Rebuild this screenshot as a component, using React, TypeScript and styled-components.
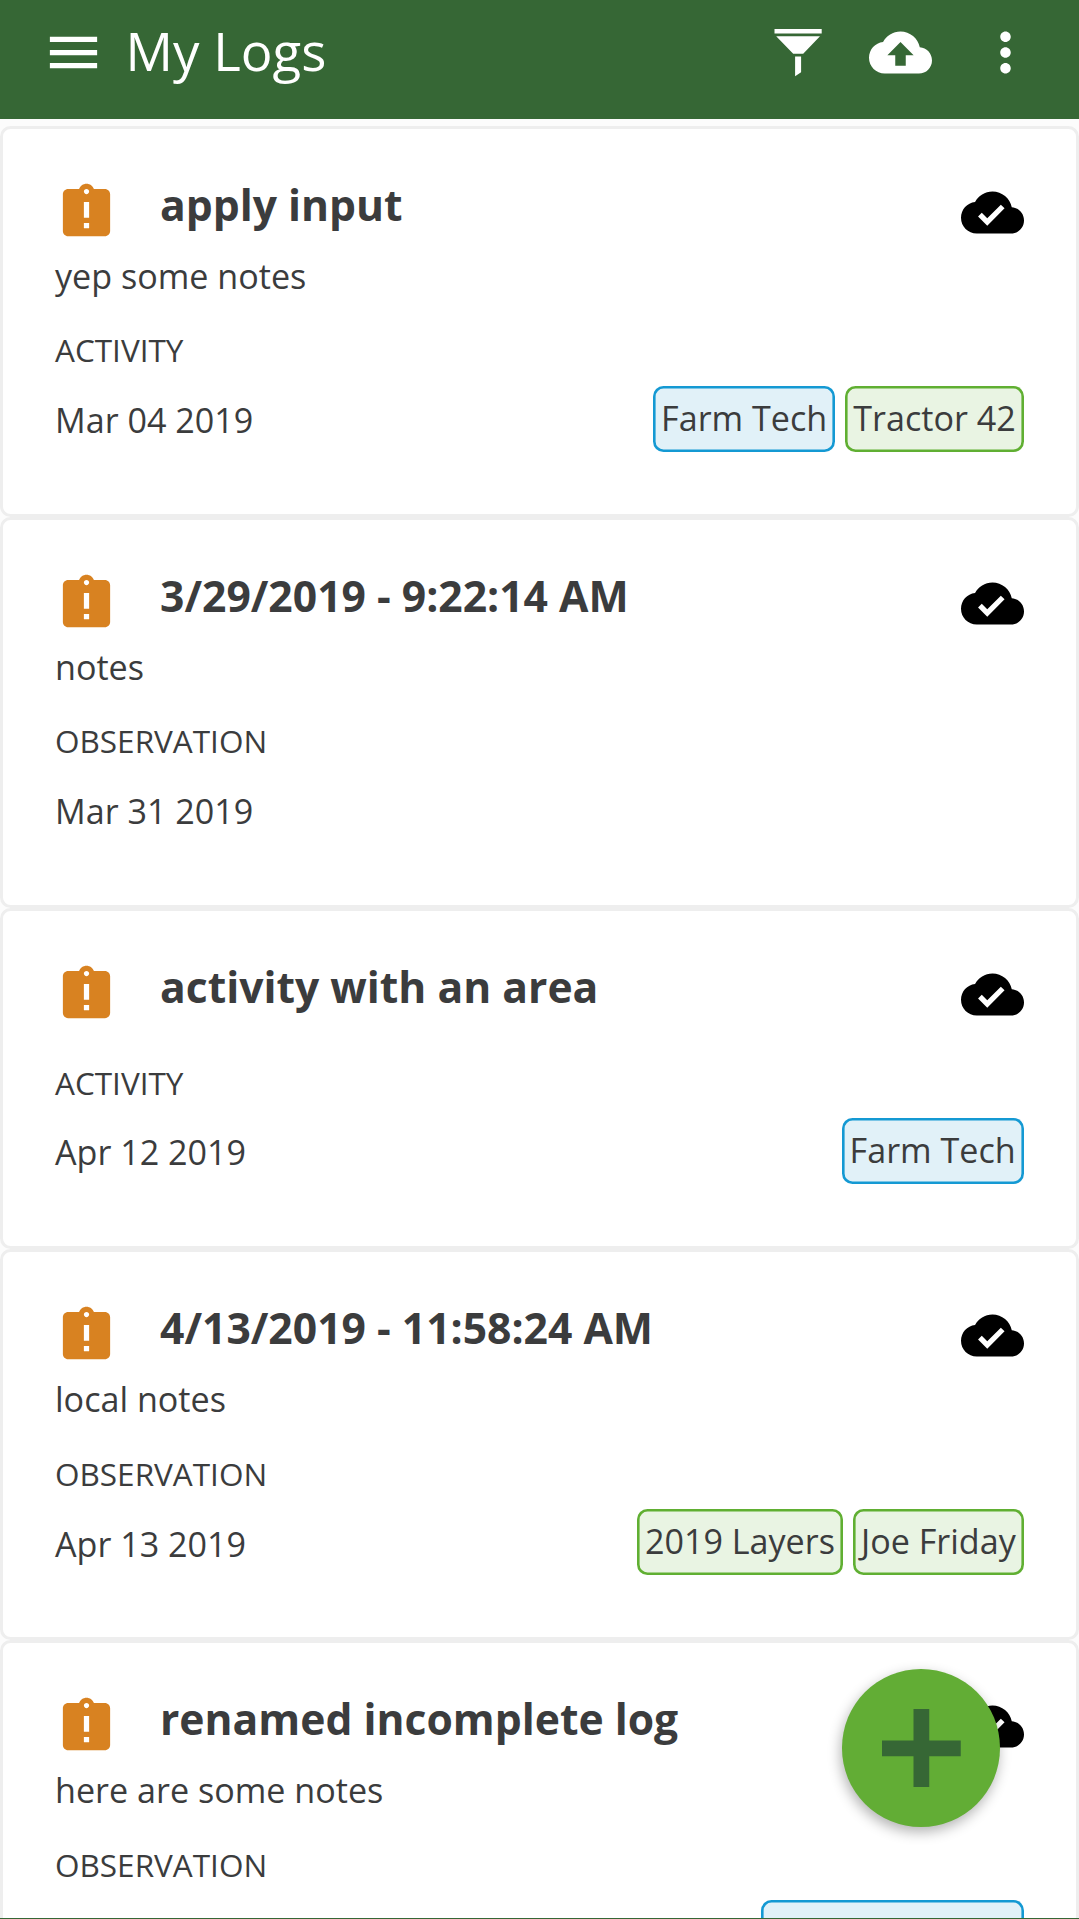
import React from 'react';
import styled, { createGlobalStyle } from 'styled-components';

const GlobalStyle = createGlobalStyle`
  * { box-sizing: border-box; }
  body {
    margin: 0;
    background: #fcfcfc;
    color: #3b3c3d;
    font-family: 'Open Sans', 'Noto Sans', sans-serif;
  }
`;

const Screen = styled.div`
  height: 1919px;
  display: flex;
  flex-direction: column;
  overflow: hidden;
  border-bottom: 1px solid #366735;
`;

const TopBar = styled.header`
  flex: none;
  height: 119px;
  display: flex;
  align-items: flex-start;
  padding: 21px 42px 0;
  background: #366735;
  color: #fff;
`;

const Heading = styled.h1`
  flex: 1;
  margin: 0 0 0 20.5px;
  font-size: 52.8px;
  font-weight: 400;
  line-height: 60px;
`;

const Actions = styled.div`
  display: flex;
  gap: 42px;
`;

const Icon = styled.svg`
  display: block;
  flex: none;
  width: 63px;
  height: 63px;
  fill: currentColor;
`;

const List = styled.main`
  flex: 1;
  min-height: 0;
  overflow: hidden;
  padding-top: 7px;
`;

const Card = styled.article`
  padding: 52.1px 52px 62.4px;
  border: 3px solid #eee;
  border-radius: 10.5px;
  background: #fff;
`;

const CardHead = styled.div`
  display: flex;
  align-items: flex-start;
  height: 70.2px;
`;

const Title = styled.h2`
  flex: 1;
  margin: 0 0 0 42px;
  font-size: 42.65px;
  font-weight: 700;
  line-height: 47px;
`;

const StatusIcon = styled(Icon)`
  color: #d88221;
`;

const SyncIcon = styled(Icon)`
  color: #000;
`;

const Notes = styled.p`
  margin: 0;
  padding-top: 0.5px;
  height: 49.875px;
  font-size: 34.125px;
  line-height: 49.875px;
`;

const Kind = styled.p`
  margin: 24.15px 0 10.75px;
  font-size: 31.5px;
  line-height: 50px;
  text-transform: uppercase;
`;

const CardFoot = styled.div`
  display: flex;
  justify-content: space-between;
  height: 65.625px;
`;

const DateText = styled.span`
  padding-top: 9.15px;
  font-size: 34.125px;
  line-height: 50px;
`;

const Chips = styled.div`
  display: flex;
  gap: 10.5px;
  margin-right: 0.5px;
`;

const Chip = styled.span<{ $tone: Tone }>`
  padding: 0 7.75px;
  border-radius: 10.5px;
  box-shadow: inset 0 0 0 2.6px ${(p) => (p.$tone === 'area' ? '#1499d3' : '#60af32')};
  background: ${(p) => (p.$tone === 'area' ? '#e1f1f8' : '#e9f4e3')};
  font-size: 34.125px;
  line-height: 64px;
  white-space: nowrap;
`;

const AddButton = styled.button`
  position: fixed;
  left: 842.4px;
  top: 1669.2px;
  width: 157.5px;
  height: 157.5px;
  padding: 0;
  display: grid;
  place-items: center;
  border: 0;
  border-radius: 50%;
  background: #62ad35;
  color: #366735;
  box-shadow: -1.5px 5px 13px rgba(0, 0, 0, 0.3);
`;

const PlusIcon = styled(Icon)`
  width: 78.75px;
  height: 78.75px;
`;

type Tone = 'area' | 'asset';

interface Log {
  title: string;
  notes?: string;
  kind: string;
  date: string;
  chips: { label: string; tone: Tone }[];
}

const logs: Log[] = [
  {
    title: 'apply input',
    notes: 'yep some notes',
    kind: 'activity',
    date: 'Mar 04 2019',
    chips: [
      { label: 'Farm Tech', tone: 'area' },
      { label: 'Tractor 42', tone: 'asset' },
    ],
  },
  {
    title: '3/29/2019 - 9:22:14 AM',
    notes: 'notes',
    kind: 'observation',
    date: 'Mar 31 2019',
    chips: [],
  },
  {
    title: 'activity with an area',
    kind: 'activity',
    date: 'Apr 12 2019',
    chips: [{ label: 'Farm Tech', tone: 'area' }],
  },
  {
    title: '4/13/2019 - 11:58:24 AM',
    notes: 'local notes',
    kind: 'observation',
    date: 'Apr 13 2019',
    chips: [
      { label: '2019 Layers', tone: 'asset' },
      { label: 'Joe Friday', tone: 'asset' },
    ],
  },
];

const CutOffChip = styled(Chip)`
  width: 262.5px;
`;

const CLOUD = 'M19.35 10.04C18.67 6.59 15.64 4 12 4 9.11 4 6.6 5.64 5.35 8.04 2.34 8.36 0 10.91 0 14c0 3.31 2.69 6 6 6h13c2.76 0 5-2.24 5-5 0-2.64-2.05-4.78-4.65-4.96z';

function LogHead({ title }: { title: string }) {
  return (
    <CardHead>
      <StatusIcon viewBox="0 0 24 24">
        <path d="M19 3h-4.18C14.4 1.84 13.3 1 12 1c-1.3 0-2.4.84-2.82 2H5c-1.1 0-2 .9-2 2v14c0 1.1.9 2 2 2h14c1.1 0 2-.9 2-2V5c0-1.1-.9-2-2-2zm-6 15h-2v-2h2v2zm0-4h-2V8h2v6zm-1-9c-.55 0-1-.45-1-1s.45-1 1-1 1 .45 1 1-.45 1-1 1z" />
      </StatusIcon>
      <Title>{title}</Title>
      <SyncIcon viewBox="0 0 24 24">
        <path d={`${CLOUD}M10 17l-3.5-3.5 1.41-1.41L10 14.17 15.18 9l1.41 1.41L10 17z`} />
      </SyncIcon>
    </CardHead>
  );
}

export default function App() {
  return (
    <>
      <GlobalStyle />
      <Screen>
        <TopBar>
          <Icon viewBox="0 0 24 24">
            <path d="M3 18h18v-2H3v2zm0-5h18v-2H3v2zm0-7v2h18V6H3z" />
          </Icon>
          <Heading>My Logs</Heading>
          <Actions>
            <Icon viewBox="0 0 63 63">
              <path d="M10.5 8h47.2v4.6H10.5zM12.2 15.2h43.8L39.2 32.7H29.2zM31.1 35.6h6v15.6l-6 4z" />
            </Icon>
            <Icon viewBox="0 0 24 24">
              <path d={`${CLOUD}M14 13v4h-4v-4H7l5-5 5 5h-3z`} />
            </Icon>
            <Icon viewBox="0 0 24 24">
              <path d="M12 8c1.1 0 2-.9 2-2s-.9-2-2-2-2 .9-2 2 .9 2 2 2zm0 2c-1.1 0-2 .9-2 2s.9 2 2 2 2-.9 2-2-.9-2-2-2zm0 6c-1.1 0-2 .9-2 2s.9 2 2 2 2-.9 2-2-.9-2-2-2z" />
            </Icon>
          </Actions>
        </TopBar>
        <List>
          {logs.map((log) => (
            <Card key={log.title}>
              <LogHead title={log.title} />
              {log.notes && <Notes>{log.notes}</Notes>}
              <Kind>{log.kind}</Kind>
              <CardFoot>
                <DateText>{log.date}</DateText>
                <Chips>
                  {log.chips.map((chip) => (
                    <Chip key={chip.label} $tone={chip.tone}>
                      {chip.label}
                    </Chip>
                  ))}
                </Chips>
              </CardFoot>
            </Card>
          ))}
          <Card>
            <LogHead title="renamed incomplete log" />
            <Notes>here are some notes</Notes>
            <Kind>observation</Kind>
            <CardFoot>
              <DateText />
              <Chips>
                <CutOffChip $tone="area" />
              </Chips>
            </CardFoot>
          </Card>
        </List>
      </Screen>
      <AddButton aria-label="Add log">
        <PlusIcon viewBox="0 0 30 30">
          <path d="M12 0h6v12h12v6H18v12h-6V18H0v-6h12z" />
        </PlusIcon>
      </AddButton>
    </>
  );
}
